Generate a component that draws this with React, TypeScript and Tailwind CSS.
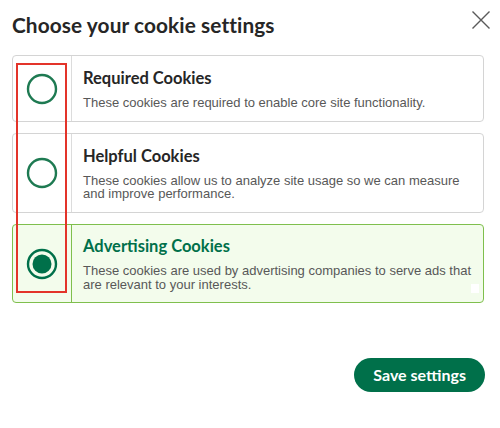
import React from "react";

const cards = [
  {
    title: "Required Cookies",
    desc: ["These cookies are required to enable core site functionality."],
    h: "h-[67px]",
    selected: false,
  },
  {
    title: "Helpful Cookies",
    desc: ["These cookies allow us to analyze site usage so we can measure", "and improve performance."],
    h: "h-[80px]",
    selected: false,
  },
  {
    title: "Advertising Cookies",
    desc: ["These cookies are used by advertising companies to serve ads that", "are relevant to your interests."],
    h: "h-[79px]",
    selected: true,
  },
];

function Radio({ selected }: { selected: boolean }) {
  return (
    <svg width="32" height="32" viewBox="0 0 32 32">
      <circle cx="16" cy="16" r="14" fill="none" stroke={selected ? "#00704a" : "#1e7a52"} strokeWidth="2.4" />
      {selected && <circle cx="16" cy="16" r="9.5" fill="#00704a" />}
    </svg>
  );
}

export default function App() {
  return (
    <div className="relative w-[500px] h-[428px] bg-white overflow-hidden" style={{ fontFamily: "Lato, 'Open Sans', sans-serif" }}>
      <div className="flex items-start justify-between pl-[12px] pr-[9px] pt-[11px]">
        <h1 className="text-[20.8px] leading-[28px] font-bold text-[#262626] tracking-[0.1px]">Choose your cookie settings</h1>
        <svg width="20" height="20" viewBox="0 0 20 20" className="mt-[-1px]">
          <path d="M1.5 1.5 L18.5 18.5 M18.5 1.5 L1.5 18.5" stroke="#5a5a5a" strokeWidth="1.4" />
        </svg>
      </div>
      <div className="flex flex-col gap-[11px] pl-[12px] pr-[16px] mt-[16px]">
        {cards.map((c, i) => (
          <div
            key={i}
            className={`relative flex rounded-[4px] border ${c.h} ${
              c.selected ? "border-[#7fbf4d] bg-[#f3fcec]" : "border-[#d4d4d4] bg-white"
            }`}
          >
            <div
              className={`w-[59px] shrink-0 flex items-center justify-center border-r ${
                c.selected ? "border-[#7fbf4d]" : "border-[#dcdcdc]"
              }`}
            >
              <Radio selected={c.selected} />
            </div>
            <div className="flex flex-col justify-center pl-[11px]">
              <div
                className={`text-[16.5px] leading-[20px] font-bold ${c.selected ? "text-[#00704a]" : "text-[#262626]"}`}
              >
                {c.title}
              </div>
              <div
                className="mt-[8px] text-[13px] leading-[13.5px] text-[#585858]"
                style={{ fontFamily: "'Liberation Sans', Arial, sans-serif" }}
              >
                {c.desc.map((d, j) => (
                  <div key={j}>{d}</div>
                ))}
              </div>
            </div>
            {c.selected && <div className="absolute right-[4px] bottom-[9px] w-[8px] h-[9px] bg-white" />}
          </div>
        ))}
      </div>
      <div className="flex justify-end pr-[15px] mt-[55px]">
        <button className="h-[34px] px-[19px] rounded-full bg-[#00704a] text-white text-[16px] font-bold leading-none">
          Save settings
        </button>
      </div>
      <div className="absolute left-[16px] top-[63px] w-[51px] h-[230px] border-2 border-[#e3342a]" />
    </div>
  );
}
